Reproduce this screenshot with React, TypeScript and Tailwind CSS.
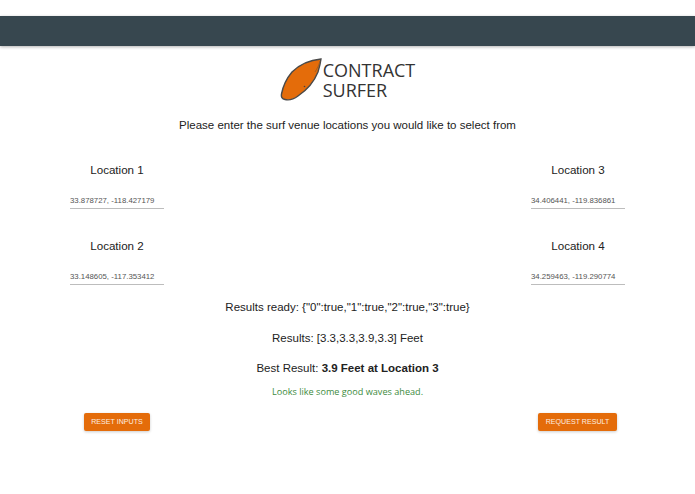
import React from 'react';

const LocationField: React.FC<{ label: string; value: string }> = ({ label, value }) => (
    <div className="w-[94px] flex flex-col items-center">
        <div className="h-[20px] leading-[20px] text-[11.6px] text-[#222] whitespace-nowrap">{label}</div>
        <div className="mt-[10px] w-full h-[19px] pt-[4px] leading-[14px] border-b border-[#bdbdbd] text-[7.8px] text-[#555] whitespace-nowrap">
            {value}
        </div>
    </div>
);

const Logo = () => (
    <div className="flex items-start justify-center h-[44px]">
        <svg width="42" height="43" viewBox="0 0 42 43" className="shrink-0">
            <path
                d="M41 1 C30 2 20 6 12 14 C7 20 3 28 1.5 36 C1 39 2 41 5 41.5 C9 42.5 14 41 18 38 C27 32 34 24 38 14 C39.5 9 40.5 5 41 1 Z"
                fill="#e46c0a"
                stroke="#4a4a4a"
                strokeWidth="1.4"
            />
            <path d="M40 3 C39 7 37 11 35 14" fill="none" stroke="#8a5a2a" strokeWidth="0.7" />
            <circle cx="24.5" cy="28.5" r="0.8" fill="#444" />
        </svg>
        <div className="ml-[1px] mt-[2px] font-['Open_Sans',sans-serif] text-[18px] leading-[20px] text-[#333]">
            <div>CONTRACT</div>
            <div>SURFER</div>
        </div>
    </div>
);

export default function App() {
    return (
        <div className="w-[695px] h-[494px] bg-white overflow-hidden font-['Liberation_Sans',Arial,sans-serif]">
            <header className="mt-[16px] h-[30px] bg-[#37474f] shadow-[0_1px_3px_rgba(0,0,0,0.3)]" />

            <main className="pt-[12px]">
                <Logo />
                <p className="mt-[15px] text-center text-[11.5px] leading-[16px] text-[#222]">
                    Please enter the surf venue locations you would like to select from
                </p>

                <div className="mt-[27px] px-[70px] flex justify-between">
                    <div className="flex flex-col gap-[27px]">
                        <LocationField label="Location 1" value="33.878727, -118.427179" />
                        <LocationField label="Location 2" value="33.148605, -117.353412" />
                    </div>
                    <div className="flex flex-col gap-[27px]">
                        <LocationField label="Location 3" value="34.406441, -119.836861" />
                        <LocationField label="Location 4" value="34.259463, -119.290774" />
                    </div>
                </div>

                <div className="mt-[14px] flex flex-col items-center text-[11.5px] leading-[16px] text-[#222]">
                    <p>Results ready: {'{"0":true,"1":true,"2":true,"3":true}'}</p>
                    <p className="mt-[15px]">Results: [3.3,3.3,3.9,3.3] Feet</p>
                    <p className="mt-[14px]">
                        Best Result: <strong className="font-bold">3.9 Feet at Location 3</strong>
                    </p>
                    <p className="mt-[8px] font-['Open_Sans',sans-serif] text-[9.15px] text-[#3d8b40]">
                        Looks like some good waves ahead.
                    </p>
                </div>

                <div className="mt-[13px] pl-[84px] pr-[78px] flex justify-between">
                    <button className="w-[66px] h-[18px] rounded-[2px] bg-[#e46c0a] text-[#fdeee0] text-[7.1px] uppercase shadow-[0_1px_3px_rgba(0,0,0,0.2)]">
                        Reset Inputs
                    </button>
                    <button className="w-[79px] h-[18px] rounded-[2px] bg-[#e46c0a] text-[#fdeee0] text-[7.1px] uppercase shadow-[0_1px_3px_rgba(0,0,0,0.2)]">
                        Request Result
                    </button>
                </div>
            </main>
        </div>
    );
}
